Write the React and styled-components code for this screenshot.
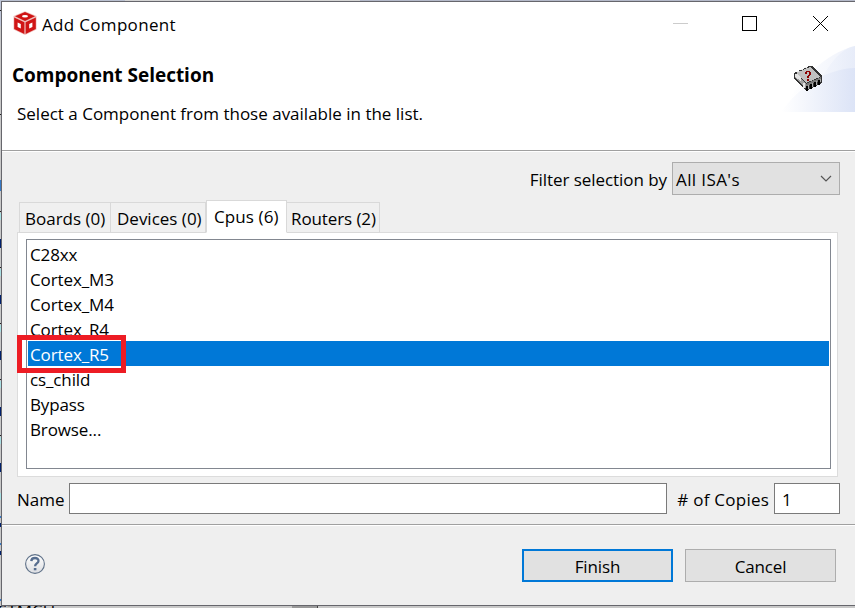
import React from "react";
import styled, { createGlobalStyle } from "styled-components";

const GlobalStyle = createGlobalStyle`
  *, *::before, *::after { box-sizing: border-box; }
  body {
    margin: 0;
    overflow: hidden;
    font: 17px/23px "Open Sans", "Noto Sans", sans-serif;
    color: #000;
  }
`;

const Desktop = styled.main`
  position: relative;
  width: 855px;
  height: 608px;
  padding: 1px 0 2px 1px;
  overflow: hidden;
  background: #c8c8c8;
`;

const TopEdge = styled.div`
  position: absolute;
  inset: 0 0 auto 0;
  height: 1px;
  background: linear-gradient(90deg, #b9c0d0 0 125px, #d4d4d4 125px 360px, #b4b9c9 360px);
`;

const LeftEdge = styled.svg`
  position: absolute;
  left: 0;
  top: 0;
  width: 1px;
  height: 608px;
`;

const UnderText = styled.div`
  position: absolute;
  left: 0;
  top: 606px;
  width: 330px;
  height: 2px;
  overflow: hidden;
  line-height: 20px;
  letter-spacing: 0;
  span { display: block; margin: -5px 0 0 -2px; }
  &::after {
    content: "";
    position: absolute;
    left: 292px;
    top: 0;
    width: 26px;
    height: 2px;
    background: #999;
    border-right: 1px solid #444;
  }
`;

const Dialog = styled.section`
  display: flex;
  flex-direction: column;
  width: 854px;
  height: 605px;
  border: solid #66666c;
  border-width: 1px 0 1px 1px;
  background: #efefef;
`;

const TitleBar = styled.header`
  display: flex;
  align-items: center;
  height: 42px;
  padding: 0 27px 0 10px;
  background: #fff;
`;

const Title = styled.h1`
  flex: 1;
  margin: 2px 0 0 4px;
  font-size: 17px;
  font-weight: 400;
  letter-spacing: 0.32px;
`;

const Controls = styled.svg`
  width: 155px;
  height: 16px;
`;

const Banner = styled.div`
  display: flex;
  justify-content: space-between;
  height: 106px;
  padding-top: 2px;
  background: #fff;
`;

const BannerText = styled.div`
  padding: 16px 0 0 10px;
`;

const Heading = styled.h2`
  margin: 0 0 14px;
  font-size: 19px;
  line-height: 26px;
  letter-spacing: -0.02px;
`;

const Hint = styled.p`
  margin: 0 0 0 5px;
`;

const BannerArt = styled.svg`
  width: 75px;
  height: 66px;
`;

const Separator = styled.hr`
  flex: none;
  width: 100%;
  height: 2px;
  margin: 0;
  border: 0;
  border-top: 1px solid #a0a0a0;
  background: #fff;
`;

const Content = styled.div`
  height: 372px;
  padding: 10px 15px 0;
`;

const FilterRow = styled.div`
  display: flex;
  align-items: center;
  justify-content: flex-end;
  gap: 5px;
  height: 33px;
`;

const Label = styled.label`
  padding-top: 2px;
  letter-spacing: ${(p) => p.$spacing || "0"};
`;

const Select = styled.button`
  display: flex;
  align-items: center;
  justify-content: space-between;
  width: 168px;
  height: 33px;
  padding: 1px 7px 0 3px;
  border: 1px solid #adadad;
  background: #e1e1e1;
  color: #000;
  font: inherit;
  letter-spacing: 0.4px;
  svg { width: 12px; height: 8px; }
`;

const Tabs = styled.nav`
  display: flex;
  align-items: flex-end;
  height: 33px;
  margin: 5px 0 -1px 2px;
  position: relative;
`;

const Tab = styled.button`
  width: ${(p) => p.$w}px;
  height: ${(p) => (p.$active ? 33 : 31)}px;
  padding: ${(p) => (p.$active ? "0" : "1px")} 0 0 ${(p) => p.$pad}px;
  border: 1px solid #d9d9d9;
  border-left-width: ${(p) => (p.$joined ? 0 : 1)}px;
  border-bottom-color: ${(p) => (p.$active ? "#fff" : "#d9d9d9")};
  background: ${(p) => (p.$active ? "#fff" : "#f0f0f0")};
  color: #000;
  font: inherit;
  letter-spacing: ${(p) => p.$spacing || "0"};
  text-align: left;
  white-space: nowrap;
`;

const TabPanel = styled.div`
  width: 821px;
  height: 245px;
  padding: 6px 6px 7px 8px;
  border: 1px solid #dcdcdc;
  background: #fff;
`;

const List = styled.ul`
  height: 230px;
  margin: 0;
  padding: 1px;
  border: 1px solid #828790;
  list-style: none;
  letter-spacing: -0.12px;
`;

const Item = styled.li`
  position: relative;
  height: 25px;
  padding: 2px 0 0 2px;
  line-height: 24px;
  background: ${(p) => (p.$selected ? "#0078d7" : "transparent")};
  color: ${(p) => (p.$selected ? "#fff" : "#000")};
`;

const Highlight = styled.span`
  position: absolute;
  z-index: 1;
  left: -11px;
  top: -6px;
  width: 109px;
  height: 38px;
  border: 5px solid #ed1c24;
`;

const FieldRow = styled.div`
  display: flex;
  align-items: center;
  height: 31px;
  margin-top: 6px;
`;

const Input = styled.input`
  width: ${(p) => p.$w}px;
  height: 31px;
  margin: ${(p) => p.$margin};
  padding: 2px 8px 0 7px;
  border: 1px solid #7a7a7a;
  border-radius: 0;
  outline: 0;
  background: #fff;
  font: inherit;
`;

const Footer = styled.footer`
  display: flex;
  align-items: center;
  gap: 12px;
  height: 79px;
  padding: 0 19px 2px 22px;
`;

const HelpButton = styled.button`
  display: flex;
  margin: 0 auto 2px 0;
  padding: 0;
  border: 0;
  background: none;
`;

const Button = styled.button`
  width: 151px;
  height: 33px;
  margin-top: 1px;
  padding: 2px 0 0;
  border: ${(p) => (p.$primary ? "2px solid #0078d7" : "1px solid #adadad")};
  background: #e1e1e1;
  color: #000;
  font: inherit;
  letter-spacing: ${(p) => (p.$primary ? "-0.1px" : "-0.15px")};
`;

const CubeIcon = () => (
  <svg width="26" height="26" viewBox="0 0 26 26">
    <path d="M13 1.2 24.5 6v13.5L13 25 1.5 19.5V6z" fill="#efc0bd" />
    <path d="M13 2 23 6.2 13 11 3 6.2z" fill="#cf1414" />
    <path d="M2.2 7.4 12.4 12.2V24L2.2 19z" fill="#d01515" />
    <path d="M23.8 7.4 13.6 12.2V24L23.8 19z" fill="#d01515" />
    <ellipse cx="13" cy="6.3" rx="3" ry="1.3" fill="#fff" />
    <path d="M5.6 12.6 8.8 14V18.6L5.6 17.1z" fill="#fff" />
    <path d="M20.4 12.6 17.2 14V18.6L20.4 17.1z" fill="#fff" />
  </svg>
);

const BannerGraphic = () => (
  <BannerArt viewBox="780 46 75 66">
    <defs>
      <linearGradient id="swoosh" gradientUnits="userSpaceOnUse" x1="790" x2="855" y1="0" y2="0">
        <stop offset="0" stopColor="#fff" />
        <stop offset="1" stopColor="#e3e9f8" />
      </linearGradient>
      <linearGradient id="wave" gradientUnits="userSpaceOnUse" x1="781" x2="855" y1="0" y2="0">
        <stop offset="0" stopColor="#fff" />
        <stop offset="1" stopColor="#dae2f6" />
      </linearGradient>
    </defs>
    <path d="M781 112C795 84 825 53 855 46V112z" fill="url(#swoosh)" opacity=".6" />
    <path d="M802 112C821 81 833 50 855 46V112z" fill="url(#swoosh)" opacity=".65" />
    <path d="M781 112C800 86 826 69 855 68V112z" fill="url(#wave)" opacity=".85" />
    <g shapeRendering="crispEdges">
      <path d="M794 73 809 66H812L822 76V83L806 91 794 79z" fill="#333" />
      <path d="M796 73 810 67 820 77 806 83z" fill="#c0c0c0" />
      <path d="M795 74 806 83V88L795 78z" fill="#a0a0a0" />
      <path d="M795 74H797L801 78V81L795 77zM803 83H805V88H803z" fill="#e3e3e3" />
      <path d="M806 84 821 77V80L806 87z" fill="#777" />
      <path d="M806 86h2v5h-2zM810 84h2v5h-2zM814 82h2v5h-2zM818 80h2v5h-2z" fill="#000" />
      <path d="M808 85h1v4h-1zM812 83h1v4h-1zM816 81h1v4h-1zM820 79h1v3h-1z" fill="#aaa" />
      <path d="M797 71h2v1h-2zM801 69h2v1h-2zM805 67h2v1h-2z" fill="#eee" />
      <path d="M806 71h4v1h-4zM805 72h2v2h-2zM809 72h2v3h-2zM808 75h2v1h-2zM807 76h2v2h-2zM807 79h2v2h-2z" fill="#8b0000" />
    </g>
  </BannerArt>
);

const HelpIcon = () => (
  <svg width="22" height="22" viewBox="0 0 22 22" fill="none">
    <defs>
      <linearGradient id="help" x2="0" y2="1">
        <stop stopColor="#fff" />
        <stop offset="1" stopColor="#dcdee2" />
      </linearGradient>
    </defs>
    <circle cx="11" cy="11" r="9.4" fill="url(#help)" stroke="#5f7188" strokeWidth="1.1" />
    <path d="M7.3 8.1C7.4 3.9 14.7 4 14.5 8c-.1 2.4-3.4 2.6-3.4 5.2" stroke="#566d8f" strokeWidth="2.3" />
    <path d="M9.8 15h2.6v2.3H9.8z" fill="#566d8f" />
  </svg>
);

const tabs = [
  { text: "Boards (0)", width: 92, pad: 5 },
  { text: "Devices (0)", width: 95, pad: 6, joined: true },
  { text: "Cpus (6)", width: 81, pad: 7, active: true, spacing: "0.1px" },
  { text: "Routers (2)", width: 93, pad: 4, joined: true, spacing: "-0.1px" },
];

const components = ["C28xx", "Cortex_M3", "Cortex_M4", "Cortex_R4", "Cortex_R5", "cs_child", "Bypass", "Browse..."];

export default function App() {
  return (
    <>
      <GlobalStyle />
      <Desktop>
        <TopEdge />
        <LeftEdge viewBox="0 0 1 608" shapeRendering="crispEdges">
          <path d="M0 0h1v26H0z" fill="#bdc4d6" />
          <path d="M0 10h1v1H0zM0 114h1v1H0zM0 211h1v1H0zM0 267h1v1H0zM0 323h1v1H0zM0 379h1v1H0zM0 435h1v1H0z" fill="#222" />
          <path d="M0 180h1v11H0zM0 516h1v2H0zM0 543h1v2H0zM0 599h1v2H0z" fill="#3779c5" />
          <path d="M0 213h1v7H0zM0 269h1v7H0zM0 325h1v7H0zM0 381h1v7H0zM0 437h1v7H0zM0 493h1v7H0z" fill="#a9e0e3" />
          <path d="M0 239h1v9H0zM0 295h1v9H0zM0 351h1v9H0zM0 407h1v9H0zM0 463h1v9H0zM0 523h1v4H0zM0 551h1v4H0z" fill="#00206c" />
        </LeftEdge>
        <Dialog>
          <TitleBar>
            <CubeIcon />
            <Title>Add Component</Title>
            <Controls viewBox="0 0 155 16" fill="none" shapeRendering="crispEdges">
              <path d="M0 8.5h15" stroke="#ccc" />
              <path d="M69.5 1.5h14v14h-14z" stroke="#000" />
              <path d="m140 1 15 15M155 1l-15 15" stroke="#000" shapeRendering="auto" />
            </Controls>
          </TitleBar>
          <Banner>
            <BannerText>
              <Heading>Component Selection</Heading>
              <Hint>Select a Component from those available in the list.</Hint>
            </BannerText>
            <BannerGraphic />
          </Banner>
          <Separator />
          <Content>
            <FilterRow>
              <Label $spacing="-0.06px">Filter selection by</Label>
              <Select>
                All ISA's
                <svg viewBox="0 0 12 8" fill="none">
                  <path d="m1 1 5 5 5-5" stroke="#555" strokeWidth="1.2" />
                </svg>
              </Select>
            </FilterRow>
            <Tabs>
              {tabs.map((t) => (
                <Tab
                  key={t.text}
                  $w={t.width}
                  $pad={t.pad}
                  $active={t.active}
                  $joined={t.joined}
                  $spacing={t.spacing}
                >
                  {t.text}
                </Tab>
              ))}
            </Tabs>
            <TabPanel>
              <List>
                {components.map((name) => (
                  <Item key={name} $selected={name === "Cortex_R5"}>
                    {name}
                    {name === "Cortex_R5" && <Highlight />}
                  </Item>
                ))}
              </List>
            </TabPanel>
            <FieldRow>
              <Label>Name</Label>
              <Input $w={598} $margin="0 10px 0 auto" aria-label="Name" />
              <Label $spacing="0.25px">{"# of Copies"}</Label>
              <Input $w={66} $margin="0 0 0 auto" defaultValue="1" aria-label="Copies" />
            </FieldRow>
          </Content>
          <Separator />
          <Footer>
            <HelpButton aria-label="Help">
              <HelpIcon />
            </HelpButton>
            <Button $primary>Finish</Button>
            <Button>Cancel</Button>
          </Footer>
        </Dialog>
        <UnderText>
          <span>STMCU</span>
        </UnderText>
      </Desktop>
    </>
  );
}
